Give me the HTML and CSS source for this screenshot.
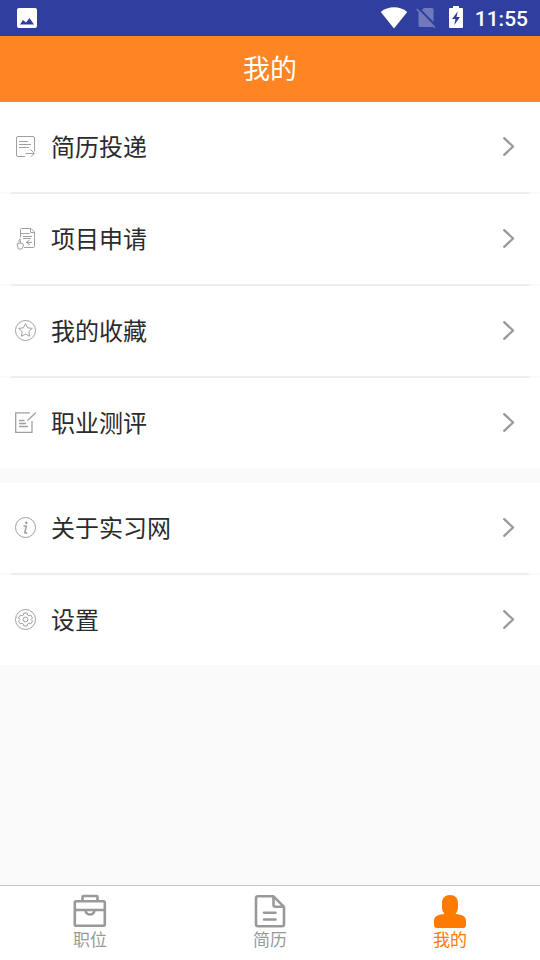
FILE: index.html
```html
<!DOCTYPE html>
<html lang="zh-CN">
<head>
<meta charset="utf-8">
<meta name="viewport" content="width=device-width, initial-scale=1">
<title>我的</title>
<link rel="stylesheet" href="styles.css">
</head>
<body>
<svg class="defs" aria-hidden="true">
  <symbol id="chevron" viewBox="0 0 12 20"><path d="M1.200 1.200 10.100 9.500 1.200 17.800" fill="none" stroke="#999" stroke-width="2.300" stroke-linecap="round" stroke-linejoin="round"/></symbol>
</svg>
<div class="status">
  <svg class="photo" width="20" height="20" viewBox="0 0 20 20"><path fill="#fff" fill-rule="evenodd" d="M2 0h16a2 2 0 0 1 2 2v16a2 2 0 0 1-2 2H2a2 2 0 0 1-2-2V2A2 2 0 0 1 2 0ZM3 16.500h14L12.500 10 9 14.500 6 12Z"/></svg>
  <svg class="wifi" width="28" height="22" viewBox="0 0 28 22"><path fill="#fff" d="M14 21.500.8 5C8-1.200 20-1.200 27.200 5Z"/></svg>
  <svg class="sim" width="20" height="22" viewBox="0 0 20 22"><path fill="#7179bb" d="M8 1h8a1.500 1.500 0 0 1 1.500 1.500V20H4A1.500 1.500 0 0 1 2.500 18.500V6Z"/><path d="M2 .5 20 19" stroke="#303f9f" stroke-width="2"/><path d="M.7 2 19 20.700" stroke="#7179bb" stroke-width="1.600"/></svg>
  <svg class="battery" width="14" height="22" viewBox="0 0 14 22"><path fill="#fff" d="M4 0h6v2h3q1 0 1 1v18q0 1-1 1H1q-1 0-1-1V3q0-1 1-1h3Z"/><path fill="#303f9f" d="M8.700 5.500 3 13h3.400L5.300 19 11 11H7.600Z"/></svg>
  <span class="clock">11:55</span>
</div>
<header class="title"><h1>我的</h1></header>
<main>
  <nav class="group" aria-label="个人">
    <a class="row" href="#delivery">
      <svg class="icon" viewBox="0 0 22 22"><path d="M11 20.500H4a1.500 1.500 0 0 1-1.500-1.500V2A1.500 1.500 0 0 1 4 .5h15A1.500 1.500 0 0 1 20.500 2v13.500M5 5.500h9M5 8.500h12M5 11.500h10M11.500 17.500h8.500M16.500 13.500l4 4-4 3.500"/></svg>
      <span class="label">简历投递</span><svg class="arrow"><use href="#chevron"/></svg>
    </a>
    <a class="row" href="#projects">
      <svg class="icon" viewBox="0 0 22 22"><path d="M6.500 9.500V1.700Q6.500.5 7.700.5H17l3.500 3.500v14.500q0 1-1 1H10M16.500.5v4h4M6.500 5.500h9M9 8.500h9M9 10.500h8M18 14.500h-6l3.500-2.500M12.500 14.500l3.500 2.500M5 12q1.500-2 1.500.5v3l2.500.5q.7.500.3 2L8 21H4.500L3 16.500q0-1.700 2-.5Z"/></svg>
      <span class="label">项目申请</span><svg class="arrow"><use href="#chevron"/></svg>
    </a>
    <a class="row" href="#favorites">
      <svg class="icon" viewBox="0 0 22 22"><circle cx="11.500" cy="10.500" r="10"/><path d="m11.500 3.500 2.100 4.300 4.700.6-3.500 3.200.9 4.700-4.200-2.300-4.200 2.300.9-4.700-3.500-3.200 4.700-.6Z"/></svg>
      <span class="label">我的收藏</span><svg class="arrow"><use href="#chevron"/></svg>
    </a>
    <a class="row" href="#assessment">
      <svg class="icon" viewBox="0 0 22 22"><path stroke-width="1.300" d="M16 .8H1.700v19.500H18V9M13.500 8.500 21.700.8M5 8.500h5.500M5 11.500h7M5 14.500h9"/></svg>
      <span class="label">职业测评</span><svg class="arrow"><use href="#chevron"/></svg>
    </a>
  </nav>
  <nav class="group" aria-label="更多">
    <a class="row" href="#about">
      <svg class="icon" viewBox="0 0 22 22"><circle cx="11.500" cy="10.500" r="10"/><circle cx="12.300" cy="5.700" r="1.200" fill="#999" stroke="none"/><path stroke-width="1.500" d="M9.500 9h2.800L10.800 15.500q0 1.200 2.400.3"/></svg>
      <span class="label">关于实习网</span><svg class="arrow"><use href="#chevron"/></svg>
    </a>
    <a class="row" href="#settings">
      <svg class="icon" viewBox="0 0 22 22"><circle cx="11.500" cy="10.500" r="10"/><circle cx="11.500" cy="10.500" r="2.400"/><path d="M9.900 4h3.200l.5 2 1.300.8 2-.6 1.600 2.800-1.500 1.500 1.500 1.500-1.600 2.800-2-.6-1.300.8-.5 2H9.900l-.5-2-1.300-.8-2 .6L4.500 12 6 10.500 4.500 9l1.600-2.800 2 .6L9.400 6Z"/></svg>
      <span class="label">设置</span><svg class="arrow"><use href="#chevron"/></svg>
    </a>
  </nav>
</main>
<nav class="tabs" aria-label="主导航">
  <a class="tab" href="#jobs">
    <svg viewBox="0 0 34 34"><g fill="none" stroke="#999" stroke-width="2.600"><rect x="1.800" y="7.300" width="30" height="24.500" rx="1.500"/><path d="M9.500 7V3q0-1 1-1h13q1 0 1 1v4M2 16h30"/><path d="M12.500 17q1 3.500 4.500 3.500t4.500-3.500"/></g></svg>
    <span>职位</span>
  </a>
  <a class="tab" href="#resume">
    <svg viewBox="0 0 34 34"><path fill="none" stroke="#999" stroke-width="2.600" stroke-linejoin="round" d="M20.500 2.300H5Q3 2.300 3 4.300v26q0 2 2 2h24q2 0 2-2V12.800L20.500 2.300v8.500q0 2 2 2H31"/><path d="M11 18.800h11.500M11 25.500h11.500" stroke="#999" stroke-width="2.600" stroke-linecap="round"/></svg>
    <span>简历</span>
  </a>
  <a class="tab active" href="#me" aria-current="page">
    <svg viewBox="0 0 34 34"><path fill="#ff7a00" d="M17 1c5 0 8 3.200 8 8v4.500q0 4-2.500 6.400C29.500 20.400 33 22.700 33 26.500V31q0 3-3 3H4q-3 0-3-3v-4.500c0-3.800 3.500-6.100 10.500-6.600Q9 17.500 9 13.500V9c0-4.800 3-8 8-8Z"/></svg>
    <span>我的</span>
  </a>
</nav>
</body>
</html>
```
FILE: styles.css
```css
* { box-sizing: border-box; }

body {
  margin: 0;
  min-height: 100vh;
  display: flex;
  flex-direction: column;
  background: #fafafa;
  color: #2b2b2b;
  font-family: "Noto Sans CJK SC", sans-serif;
}

a { color: inherit; text-decoration: none; }
svg { display: block; flex: none; }
.defs { position: absolute; width: 0; height: 0; }

.status {
  display: flex;
  align-items: center;
  height: 36px;
  padding: 0 12px 0 17px;
  background: #303f9f;
  color: #fff;
}
.photo { margin-right: auto; }
.wifi { margin-right: 8px; }
.sim { margin-right: 13px; }
.battery { margin-right: 12px; margin-bottom: 2px; }
.clock {
  padding-top: 2px;
  font: 500 21px/34px Roboto, sans-serif;
}

.title {
  display: flex;
  align-items: center;
  justify-content: center;
  height: 66px;
  padding-bottom: 2px;
  background: #ff8423;
  color: #fff;
}
.title h1 {
  margin: 0;
  font-size: 27px;
  line-height: 40px;
  font-weight: 400;
}

main { flex: 1; }
.group { background: #fff; }
.group + .group { margin-top: 15px; }

.row {
  display: flex;
  align-items: center;
  height: 90px;
  padding: 0 25px 0 14px;
}
.row + .row {
  height: 92px;
  border-top: 2px solid;
  border-image: linear-gradient(to right, #fafafa 11px, #eee 11px, #eee calc(100% - 11px), #fafafa calc(100% - 11px)) 2 0 0;
}
.icon {
  width: 22px;
  height: 22px;
  margin-right: 15px;
  fill: none;
  stroke: #a0a0a0;
  stroke-width: 1;
}
.label {
  flex: 1;
  padding-bottom: 2px;
  font-size: 24px;
  line-height: 36px;
}
.arrow { width: 12px; height: 20px; }

.tabs {
  display: flex;
  height: 75px;
  border-top: 1px solid #c4c4c4;
  background: #fff;
  color: #999;
}
.tab {
  flex: 1;
  display: flex;
  flex-direction: column;
  align-items: center;
  padding-top: 8px;
  font-size: 17px;
  line-height: 22px;
}
.tab svg { width: 34px; height: 34px; }
.active { color: #ff7a00; }
```
